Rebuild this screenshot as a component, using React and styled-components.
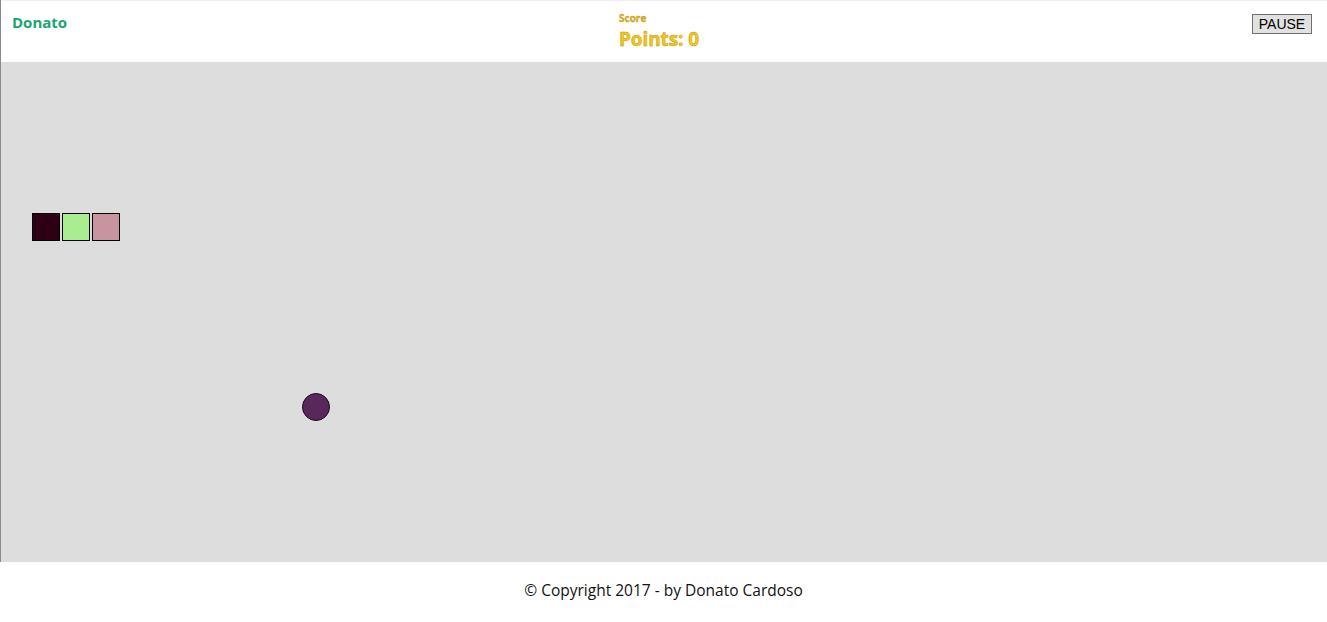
import styled, { createGlobalStyle } from "styled-components";

const GlobalStyle = createGlobalStyle`
  html, body {
    margin: 0;
    padding: 0;
    background: #fff;
    font-family: "Open Sans", "Noto Sans", sans-serif;
  }
`;

const snake = [
  { x: 32, y: 213, color: "#2e0013" },
  { x: 62, y: 213, color: "#aaec90" },
  { x: 92, y: 213, color: "#c8949f" },
];

const food = { x: 302, y: 393, color: "#58285a" };

// board starts at x=1 (left border) and y=62 (header)
const BOARD_X = 1;
const BOARD_Y = 62;

function App() {
  return (
    <>
      <GlobalStyle />
      <Page>
        <Header>
          <Brand>Donato</Brand>
          <ScoreBox>
            <ScoreLabel>Score</ScoreLabel>
            <Points>Points: 0</Points>
          </ScoreBox>
          <PauseButton>PAUSE</PauseButton>
        </Header>
        <Board>
          {snake.map((s, i) => (
            <Segment
              key={i}
              $color={s.color}
              style={{ left: s.x - BOARD_X, top: s.y - BOARD_Y }}
            />
          ))}
          <Food
            $color={food.color}
            style={{ left: food.x - BOARD_X, top: food.y - BOARD_Y }}
          />
        </Board>
      </Page>
      <Footer>© Copyright 2017 - by Donato Cardoso</Footer>
    </>
  );
}

const Page = styled.div`
  border-left: 1px solid #8a8a8a;
`;

const Header = styled.header`
  height: 62px;
  box-sizing: border-box;
  display: grid;
  grid-template-columns: 1fr auto 1fr;
  align-items: start;
  padding: 0 15px 0 11px;
  border-top: 1px solid #f0f0f0;
`;

const Brand = styled.div`
  color: #17a673;
  font-weight: 700;
  font-size: 15px;
  margin-top: 11px;
`;

const ScoreBox = styled.div`
  display: flex;
  flex-direction: column;
  margin-top: 10px;
  margin-right: 6px;
`;

const ScoreLabel = styled.span`
  color: #e0b418;
  font-weight: 700;
  font-size: 10px;
  line-height: 14px;
  -webkit-text-stroke: 0.3px #b08c00;
`;

const Points = styled.span`
  color: #f3c61c;
  font-weight: 700;
  font-size: 19px;
  line-height: 29px;
  letter-spacing: -0.1px;
  -webkit-text-stroke: 0.5px #c19a06;
`;

const PauseButton = styled.button`
  justify-self: end;
  margin-top: 13px;
  height: 20px;
  width: 60px;
  padding: 0;
  font-family: "Liberation Sans", Arial, sans-serif;
  font-size: 14px;
  color: #000;
  background: #e1e1e1;
  border: 1px solid #707070;
  border-radius: 0;
`;

const Board = styled.main`
  position: relative;
  height: 500px;
  background: #dddddd;
`;

const Segment = styled.div`
  position: absolute;
  width: 28px;
  height: 28px;
  box-sizing: border-box;
  border: 1px solid #000;
  background: ${(p) => p.$color};
`;

const Food = styled.div`
  position: absolute;
  width: 28px;
  height: 28px;
  box-sizing: border-box;
  border-radius: 50%;
  border: 1px solid #1a0a1a;
  background: ${(p) => p.$color};
`;

const Footer = styled.footer`
  height: 60px;
  box-sizing: border-box;
  padding-bottom: 4px;
  display: flex;
  align-items: center;
  justify-content: center;
  font-size: 15.5px;
  color: #111;
`;

export default App;
